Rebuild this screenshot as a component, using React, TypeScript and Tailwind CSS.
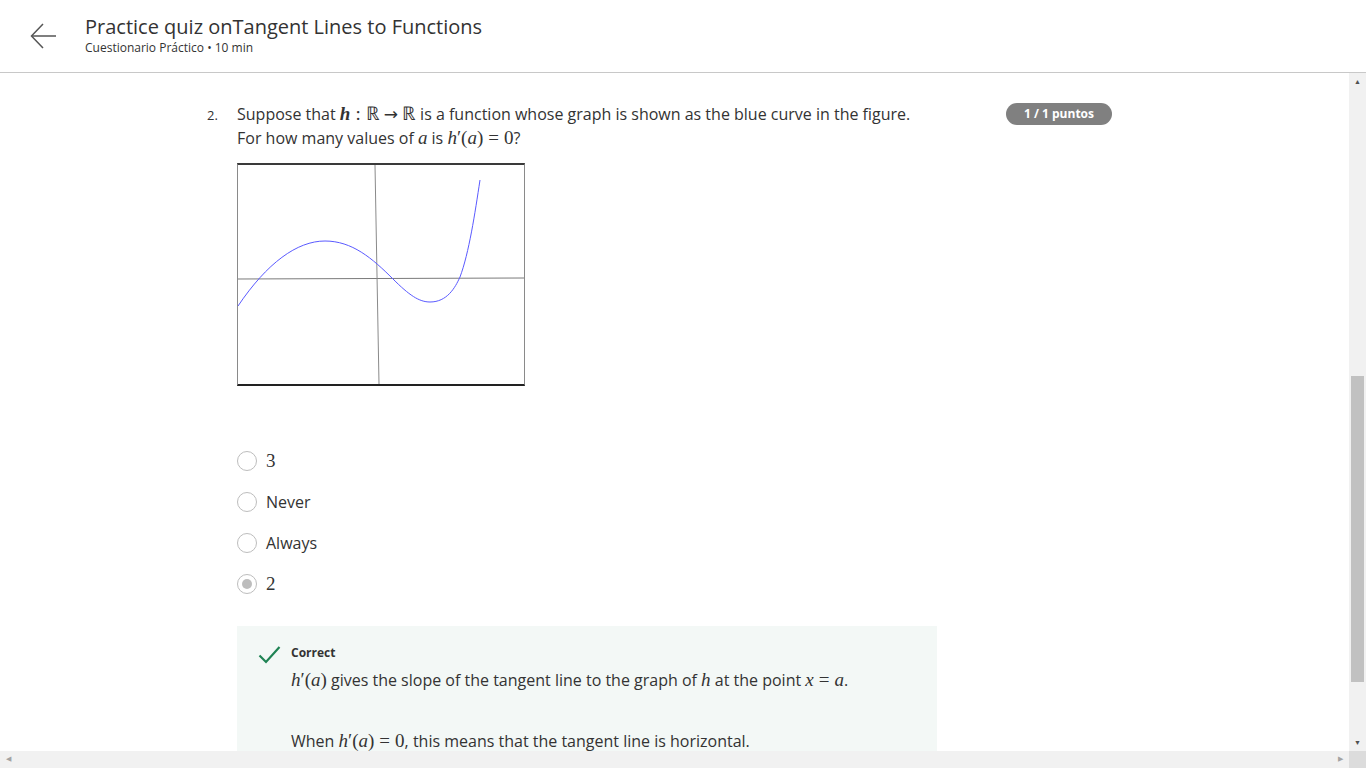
import React from 'react'

const sans = { fontFamily: '"Open Sans", "Noto Sans", sans-serif' }

function M({ children, className = '' }: { children: React.ReactNode; className?: string }) {
  return <span className={`font-['Liberation_Serif',serif] text-[19px] ${className}`}>{children}</span>
}

const Eq = () => <span className="mx-[5px]">=</span>

function Radio({ checked }: { checked?: boolean }) {
  return (
    <span className="w-[20px] h-[20px] rounded-full border-[1.5px] border-[#bdbdbd] bg-white flex items-center justify-center shrink-0">
      {checked && <span className="w-[10px] h-[10px] rounded-full bg-[#bdbdbd]" />}
    </span>
  )
}

function Graph() {
  return (
    <div className="w-[288px] h-[223px] border-x border-x-[#8a8a8a] border-t-2 border-t-[#3a3a3a] border-b-2 border-b-[#222] bg-white">
      <svg width="286" height="219" viewBox="0 0 286 219">
        <line x1="0" y1="114" x2="286" y2="113" stroke="#7a7a7a" strokeWidth="1" />
        <line x1="137" y1="0" x2="141" y2="219" stroke="#8a8a8a" strokeWidth="1" />
        <path
          d="M0,141 C29,98 59,76 87,76 C114,76 134,93 155,114 C171,130 181,137 192,137 C209,137 217,123 222,112 C231,88 237,48 242,15"
          fill="none"
          stroke="#5a5aff"
          strokeWidth="1"
        />
      </svg>
    </div>
  )
}

const options = [
  { label: '3', math: true },
  { label: 'Never' },
  { label: 'Always' },
  { label: '2', math: true, checked: true },
]

export default function App() {
  return (
    <div className="h-screen w-full flex flex-col bg-white text-[#333] overflow-hidden" style={sans}>
      <header className="h-[73px] shrink-0 border-b border-[#c8c8c8] flex items-center">
        <div className="w-[85px] flex justify-center pl-[2px]">
          <svg width="28" height="26" viewBox="0 0 28 26" fill="none" stroke="#555" strokeWidth="1.5">
            <path d="M26 13H2" />
            <path d="M13 1L1.5 13L13 25" />
          </svg>
        </div>
        <div className="flex flex-col -mt-[2px]">
          <h1 className="text-[20px] leading-[26px] text-[#333]">Practice quiz onTangent Lines to Functions</h1>
          <p className="text-[12px] leading-[16px] text-[#333]">Cuestionario Práctico • 10 min</p>
        </div>
      </header>

      <div className="flex-1 flex min-h-0">
        <main className="flex-1 overflow-hidden pt-[29px]">
          <div className="ml-[207px] w-[905px] flex">
            <span className="w-[30px] text-[13px] leading-[24px] pt-[1px]">2.</span>
            <div className="flex-1">
              <div className="flex justify-between items-start">
                <div className="text-[16px] leading-[24px]">
                  <p>
                    Suppose that <M className="font-bold italic">h</M>
                    <M className="mx-[5px]">:</M>
                    <M>ℝ</M>
                    <span className="font-['DejaVu_Sans',sans-serif] text-[17px] leading-none mx-[4px]">→</span>
                    <M>ℝ</M> is a function whose graph is shown as the blue curve in the figure.
                  </p>
                  <p>
                    For how many values of <M className="italic">a</M> is <M><i>h</i>′(<i>a</i>)<Eq />0</M>?
                  </p>
                </div>
                <span className="h-[22px] mt-[1px] px-[18px] rounded-full bg-[#808080] text-white text-[12px] font-bold flex items-center">1 / 1 puntos</span>
              </div>

              <div className="mt-[13px]">
                <Graph />
              </div>

              <div className="mt-[65px] flex flex-col gap-[21px]">
                {options.map((o) => (
                  <label key={o.label} className="flex items-center gap-[9px] h-[20px]">
                    <Radio checked={o.checked} />
                    {o.math ? <M>{o.label}</M> : <span className="text-[16px]">{o.label}</span>}
                  </label>
                ))}
              </div>

              <div className="mt-[32px] w-[700px] bg-[#f3f8f6] pl-[21px] pt-[18px] pb-[30px]">
                <div className="flex gap-[10px]">
                  <svg width="23" height="20" viewBox="0 0 23 20" fill="none" stroke="#1f8354" strokeWidth="2.2" className="mt-[1px] shrink-0">
                    <path d="M1.5 10.5L8 17L21.5 2" />
                  </svg>
                  <div className="text-[16px] leading-[26px]">
                    <p className="text-[12px] font-bold leading-[16px] text-[#333] mt-[1px]">Correct</p>
                    <p className="mt-[6px]">
                      <M><i>h</i>′(<i>a</i>)</M> gives the slope of the tangent line to the graph of <M className="italic">h</M> at the point <M><i>x</i><Eq /><i>a</i></M>.
                    </p>
                    <p className="mt-[35px]">
                      When <M><i>h</i>′(<i>a</i>)<Eq />0</M>, this means that the tangent line is horizontal.
                    </p>
                  </div>
                </div>
              </div>
            </div>
          </div>
        </main>
        <div className="w-[17px] shrink-0 bg-[#f1f1f1] flex flex-col items-center">
          <span className="h-[17px] flex items-center justify-center text-[#505050] text-[7px] leading-none">▲</span>
          <div className="flex-1 w-full px-[2px] pt-[286px] pb-[52px]">
            <div className="h-full w-full bg-[#c1c1c1]" />
          </div>
          <span className="h-[17px] flex items-center justify-center text-[#505050] text-[7px] leading-none">▼</span>
        </div>
      </div>
      <div className="h-[17px] shrink-0 flex bg-[#f1f1f1]">
        <span className="w-[17px] flex items-center justify-center text-[#a3a3a3] text-[7px]">◀</span>
        <div className="flex-1" />
        <span className="w-[17px] flex items-center justify-center text-[#a3a3a3] text-[7px]">▶</span>
        <span className="w-[17px] bg-[#dcdcdc]" />
      </div>
    </div>
  )
}
